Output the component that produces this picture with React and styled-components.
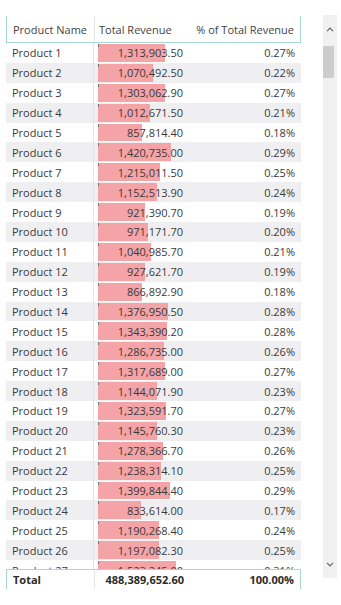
import React from 'react';
import styled, { createGlobalStyle } from 'styled-components';

const rows = [
  [1313903.5, '0.27%'],
  [1070492.5, '0.22%'],
  [1303062.9, '0.27%'],
  [1012671.5, '0.21%'],
  [857814.4, '0.18%'],
  [1420735.0, '0.29%'],
  [1215011.5, '0.25%'],
  [1152513.9, '0.24%'],
  [921390.7, '0.19%'],
  [971171.7, '0.20%'],
  [1040985.7, '0.21%'],
  [927621.7, '0.19%'],
  [866892.9, '0.18%'],
  [1376950.5, '0.28%'],
  [1343390.2, '0.28%'],
  [1286735.0, '0.26%'],
  [1317689.0, '0.27%'],
  [1144071.9, '0.23%'],
  [1323591.7, '0.27%'],
  [1145760.3, '0.23%'],
  [1278366.7, '0.26%'],
  [1238314.1, '0.25%'],
  [1399844.4, '0.29%'],
  [833614.0, '0.17%'],
  [1190268.4, '0.24%'],
  [1197082.3, '0.25%'],
  [1523245.0, '0.31%'],
];

const fmt = (v) =>
  v.toLocaleString('en-US', { minimumFractionDigits: 2, maximumFractionDigits: 2 });

function App() {
  return (
    <Page>
      <GlobalStyle />
      <Table>
        <Header>
          <NameCell>Product Name</NameCell>
          <RevenueCell $head>Total Revenue</RevenueCell>
          <PctCell>% of Total Revenue</PctCell>
        </Header>
        <Body>
          {rows.map(([value, pct], i) => (
            <Row key={i} $alt={i % 2 === 1}>
              <NameCell>Product {i + 1}</NameCell>
              <RevenueCell>
                <Bar style={{ width: Math.round((value / 1e6) * 51.2) }} />
                <Value>{fmt(value)}</Value>
              </RevenueCell>
              <PctCell>{pct}</PctCell>
            </Row>
          ))}
        </Body>
        <Footer>
          <NameCell>Total</NameCell>
          <RevenueCell>488,389,652.60</RevenueCell>
          <PctCell>100.00%</PctCell>
        </Footer>
      </Table>
      <Scrollbar>
        <Arrow>
          <svg width="8" height="5" viewBox="0 0 8 5">
            <path d="M1 4.2 L4 1.2 L7 4.2" fill="none" stroke="#666" strokeWidth="1.2" />
          </svg>
        </Arrow>
        <Thumb />
        <Spacer />
        <Arrow>
          <svg width="8" height="5" viewBox="0 0 8 5">
            <path d="M1 0.8 L4 3.8 L7 0.8" fill="none" stroke="#666" strokeWidth="1.2" />
          </svg>
        </Arrow>
      </Scrollbar>
    </Page>
  );
}

const GlobalStyle = createGlobalStyle`
  html, body {
    margin: 0;
    padding: 0;
    background: #fff;
  }
  body {
    font-family: "Segoe UI", "Open Sans", "Noto Sans", sans-serif;
    color: #333;
  }
`;

const Page = styled.div`
  width: 341px;
  height: 605px;
  display: flex;
  align-items: flex-start;
  padding: 16px 0 0 6px;
  box-sizing: border-box;
`;

const Table = styled.div`
  width: 295px;
  display: flex;
  flex-direction: column;
  font-size: 11px;
`;

const Grid = styled.div`
  display: grid;
  grid-template-columns: 88px 93px 1fr;
  align-items: center;
`;

const Header = styled(Grid)`
  height: 26px;
  border: 1px solid #a6d9d0;
  border-top: none;
  color: #444;
`;

const Body = styled.div`
  height: 526px;
  overflow: hidden;
`;

const Row = styled(Grid)`
  height: 19.9px;
  background: ${(p) => (p.$alt ? '#efeff1' : '#fff')};
  color: #3a3a3a;
`;

const Footer = styled(Grid)`
  height: 19px;
  border: 1px solid #a6d9d0;
  border-bottom: none;
  font-weight: 700;
  color: #2b2b2b;
`;

const NameCell = styled.div`
  padding-left: 6px;
  white-space: nowrap;
  height: 100%;
  display: flex;
  align-items: center;
  border-right: 1px solid #e4e4e4;
`;

const RevenueCell = styled.div`
  position: relative;
  height: 100%;
  display: flex;
  align-items: center;
  justify-content: ${(p) => (p.$head ? 'flex-start' : 'flex-end')};
  padding: 0 4px;
  white-space: nowrap;
`;

const Bar = styled.div`
  position: absolute;
  left: 4px;
  top: 1px;
  bottom: 1px;
  background: #f4a3a6;

  &::before {
    content: '';
    position: absolute;
    left: 0;
    top: 0;
    width: 1px;
    height: 3px;
    background: #777;
  }
`;

const Value = styled.span`
  position: relative;
`;

const PctCell = styled.div`
  text-align: right;
  padding-right: 6px;
  white-space: nowrap;
`;

const Scrollbar = styled.div`
  margin-left: 22px;
  width: 14px;
  height: 563px;
  margin-top: -1px;
  background: #f1f1f1;
  display: flex;
  flex-direction: column;
  align-items: center;
`;

const Arrow = styled.div`
  height: 28px;
  display: flex;
  align-items: center;
  justify-content: center;
  width: 100%;
`;

const Thumb = styled.div`
  align-self: flex-start;
  width: 11px;
  height: 32px;
  margin-top: 3px;
  background: #cdcdcd;
`;

const Spacer = styled.div`
  flex: 1;
`;

export default App;
